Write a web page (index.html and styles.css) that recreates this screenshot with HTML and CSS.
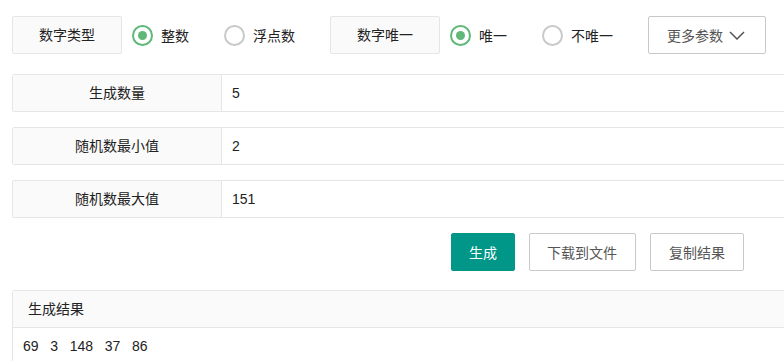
FILE: index.html
```html
<!DOCTYPE html>
<html lang="zh-CN">
<head>
    <meta charset="UTF-8">
    <meta name="viewport" content="width=device-width, initial-scale=1.0">
    <title>随机数生成器</title>
    <link rel="stylesheet" href="styles.css">
</head>
<body>
    <div class="wrap">
        <!-- Options -->
        <div class="option-row">
            <div class="label">数字类型</div>
            <div class="radio checked"><span class="dot"></span>整数</div>
            <div class="radio"><span class="dot"></span>浮点数</div>

            <div class="label">数字唯一</div>
            <div class="radio checked"><span class="dot"></span>唯一</div>
            <div class="radio"><span class="dot"></span>不唯一</div>

            <button class="btn btn-more">更多参数
                <svg class="chevron" width="16" height="9" viewBox="0 0 16 9">
                    <path d="M1 1 L8 8 L15 1" fill="none" stroke="#555" stroke-width="1.5"/>
                </svg>
            </button>
        </div>

        <!-- Inputs -->
        <div class="form-item">
            <div class="form-label">生成数量</div>
            <div class="form-input">5</div>
        </div>
        <div class="form-item">
            <div class="form-label">随机数最小值</div>
            <div class="form-input">2</div>
        </div>
        <div class="form-item">
            <div class="form-label">随机数最大值</div>
            <div class="form-input">151</div>
        </div>

        <div class="actions">
            <button class="btn btn-primary">生成</button>
            <button class="btn">下载到文件</button>
            <button class="btn">复制结果</button>
        </div>

        <!-- Result -->
        <div class="panel">
            <div class="panel-header">生成结果</div>
            <div class="panel-body">69&nbsp;&nbsp;&nbsp;3&nbsp;&nbsp;&nbsp;148&nbsp;&nbsp;&nbsp;37&nbsp;&nbsp;&nbsp;86</div>
        </div>
    </div>
</body>
</html>
```

FILE: styles.css
```css
* {
    margin: 0;
    padding: 0;
    box-sizing: border-box;
}

body {
    font-family: "Liberation Sans", "Noto Sans CJK SC", sans-serif;
    font-size: 14px;
    color: #333;
    background: #fff;
    overflow: hidden;
}

.wrap {
    width: 840px;
    padding: 16px 0 0 12px;
}

/* top option row */
.option-row {
    display: flex;
    align-items: center;
    height: 38px;
    margin-bottom: 20px;
}

.label {
    width: 110px;
    height: 38px;
    line-height: 36px;
    text-align: center;
    background: #fafafa;
    border: 1px solid #e6e6e6;
    border-radius: 2px;
    color: #222;
}

.radio + .label {
    margin-left: 10px;
}

.radio {
    display: flex;
    align-items: center;
    margin-left: 10px;
    margin-right: 25px;
    color: #222;
}

.radio .dot {
    position: relative;
    width: 21px;
    height: 21px;
    border: 2px solid #c9c9c9;
    border-radius: 50%;
    margin-right: 8px;
}

.radio.checked .dot {
    border-color: #5fb878;
}

.radio.checked .dot::after {
    content: '';
    position: absolute;
    top: 4px;
    left: 4px;
    width: 9px;
    height: 9px;
    border-radius: 50%;
    background: #5fb878;
}

.btn {
    height: 38px;
    padding: 0 18px;
    font-family: inherit;
    font-size: 14px;
    color: #555;
    background: #fff;
    border: 1px solid #c9c9c9;
    border-radius: 2px;
    cursor: pointer;
}

.btn-more {
    display: flex;
    align-items: center;
    gap: 6px;
    width: 118px;
    padding: 0 0 0 18px;
    margin-left: 10px;
}

.btn-primary {
    padding: 0 17px;
    color: #fff;
    background: #009688;
    border-color: #009688;
}

/* input rows */
.form-item {
    display: flex;
    height: 38px;
    margin-bottom: 15px;
    border: 1px solid #e6e6e6;
    border-radius: 2px;
}

.form-label {
    width: 209px;
    line-height: 36px;
    text-align: center;
    background: #fafafa;
    border-right: 1px solid #e6e6e6;
    color: #222;
}

.form-input {
    flex: 1;
    line-height: 36px;
    padding-left: 10px;
    color: #222;
}

.actions {
    display: flex;
    gap: 14px;
    padding-left: 439px;
    margin-bottom: 19px;
}

.actions .btn:nth-child(2) {
    padding: 0 18px 0 17px;
}

/* result panel */
.panel {
    border: 1px solid #e6e6e6;
    border-radius: 2px;
}

.panel-header {
    height: 37px;
    line-height: 36px;
    padding-left: 15px;
    background: #fafafa;
    border-bottom: 1px solid #e6e6e6;
    color: #222;
}

.panel-body {
    padding: 8px 10px;
    line-height: 20px;
    color: #222;
}
```
